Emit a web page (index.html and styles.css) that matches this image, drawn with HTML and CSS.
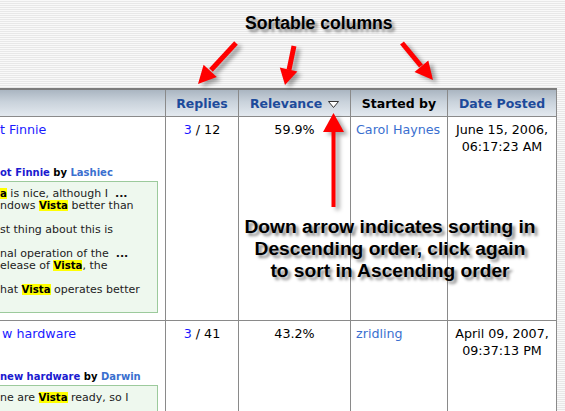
FILE: index.html
```html
<!DOCTYPE html>
<html>
<head>
<meta charset="utf-8">
<link rel="stylesheet" href="styles.css">
</head>
<body>
<div class="stage">
  <div class="caption">Sortable columns</div>
  <table class="results">
    <thead>
      <tr>
        <th class="c1"></th>
        <th class="c2"><a class="sort">Replies</a></th>
        <th class="c3"><a class="sort">Relevance</a><svg class="tri" width="11" height="7" viewBox="0 0 11 7"><polygon points="0.5,0.5 10.5,0.5 5.5,6.5" fill="#fff" stroke="#333" stroke-width="1"/></svg></th>
        <th class="c4">Started by</th>
        <th class="c5"><a class="sort">Date Posted</a></th>
      </tr>
    </thead>
    <tbody>
      <tr>
        <td class="c1">
          <div class="title"><a class="topic">t Finnie</a></div>
          <div class="byline"><a class="post">ot Finnie</a> by <a class="user">Lashiec</a></div>
          <div class="snips">
            <div class="snip">
              <div class="ln"><span class="hl">a</span> is nice, although I&nbsp;&nbsp;<b>...</b></div>
              <div class="ln">ndows <span class="hl">Vista</span> better than</div>
            </div>
            <div class="snip">
              <div class="ln">st thing about this is</div>
            </div>
            <div class="snip">
              <div class="ln">nal operation of the&nbsp;&nbsp;<b>...</b></div>
              <div class="ln">elease of <span class="hl">Vista</span>, the</div>
            </div>
            <div class="snip">
              <div class="ln">hat <span class="hl">Vista</span> operates better</div>
            </div>
          </div>
        </td>
        <td class="c2 num"><a class="topic">3</a> / 12</td>
        <td class="c3 num">59.9%</td>
        <td class="c4 starter"><a class="user">Carol Haynes</a></td>
        <td class="c5 date">June 15, 2006,<br>06:17:23 AM</td>
      </tr>
      <tr>
        <td class="c1">
          <div class="title t2"><a class="topic">w hardware</a></div>
          <div class="byline"><a class="post">new hardware</a> by <a class="user">Darwin</a></div>
          <div class="snips">
            <div class="snip">
              <div class="ln">ne are <span class="hl">Vista</span> ready, so I</div>
            </div>
          </div>
        </td>
        <td class="c2 num"><a class="topic">3</a> / 41</td>
        <td class="c3 num">43.2%</td>
        <td class="c4 starter"><a class="user">zridling</a></td>
        <td class="c5 date">April 09, 2007,<br>09:37:13 PM</td>
      </tr>
    </tbody>
  </table>

  <div class="note">Down arrow indicates sorting in<br>Descending order, click again<br>to sort in Ascending order</div>

  <svg class="arrows" width="565" height="411" viewBox="0 0 565 411">
    <g class="red">
      <line x1="236" y1="43" x2="211" y2="70" stroke="#ff0000" stroke-width="5"/>
      <polygon points="198,84 216.8,76.9 203.6,64.7" fill="#ff0000"/>
      <line x1="294" y1="46" x2="289" y2="70" stroke="#ff0000" stroke-width="5"/>
      <polygon points="285,85 297.4,71.4 279.8,67.4" fill="#ff0000"/>
      <line x1="402" y1="43" x2="421" y2="66" stroke="#ff0000" stroke-width="5"/>
      <polygon points="433,80 428.3,60.4 414.5,72" fill="#ff0000"/>
      <rect x="331.5" y="130" width="4" height="77" fill="#ff0000"/>
      <polygon points="333.5,113 344,132 323,132" fill="#ff0000"/>
    </g>
  </svg>
</div>
</body>
</html>
```
FILE: styles.css
```css
html, body {
  margin: 0;
  padding: 0;
}
body {
  width: 565px;
  height: 411px;
  overflow: hidden;
  background: repeating-linear-gradient(to bottom, #f9f9f9 0, #f9f9f9 1px, #e8e8e8 1px, #e8e8e8 2px);
  font-family: "DejaVu Sans", Verdana, sans-serif;
  font-size: 12.7px;
  color: #000;
}
.stage {
  position: relative;
  width: 565px;
  height: 411px;
}
.caption {
  height: 88px;
  box-sizing: border-box;
  padding: 13px 0 0 245px;
  font-family: "Liberation Sans", Arial, sans-serif;
  font-weight: bold;
  font-size: 17.6px;
  line-height: 20px;
  color: #000;
  text-shadow: 3px 3px 3px rgba(0,0,0,0.45);
}
.results {
  border-collapse: separate;
  border-spacing: 0;
  table-layout: fixed;
  width: 557px;
  border-top: 2px solid #7c7c7c;
  background: #fff;
}
.results th, .results td {
  box-sizing: border-box;
  border-right: 1px solid #8a8a8a;
  border-bottom: 1px solid #8a8a8a;
  padding: 0;
}
.c1 { width: 166px; }
.c2 { width: 73px; }
.c3 { width: 112px; }
.c4 { width: 97px; }
.c5 { width: 109px; }
.results th {
  height: 27px;
  background: linear-gradient(to bottom, #aab5c1 0%, #c9d2db 45%, #e3e9ef 100%);
  font-size: 12.5px;
  font-weight: bold;
  text-align: center;
  vertical-align: middle;
  white-space: nowrap;
  color: #000;
}
.sort {
  color: #1d4b9b;
}
.tri {
  margin-left: 6px;
  vertical-align: 0px;
}
.results td {
  vertical-align: top;
  padding-top: 4px;
  line-height: 17px;
}
.results td.c1 {
  padding: 4px 7px 7px 0;
  overflow: hidden;
}
.num, .date {
  text-align: center;
}
.starter {
  padding-left: 5px !important;
}
.topic {
  color: #1a1aff;
}
.user {
  color: #3a6fcf;
}
.title {
  white-space: nowrap;
}
.t2 { text-indent: 2px; }
.byline {
  margin-top: 28px;
  font-size: 10px;
  font-weight: bold;
  line-height: 13px;
  white-space: nowrap;
}
.byline .post { color: #1a1ad0; }
.snips {
  margin-top: 2px;
  margin-left: -4px;
  border: 1px solid #9cca9c;
  background: #eef8ee;
  padding: 6px 0 16px 3px;
  font-size: 11px;
  line-height: 12px;
  color: #222;
  display: flex;
  flex-direction: column;
  gap: 12px;
}
.ln {
  white-space: nowrap;
}
.ln b {
  font-weight: bold;
  color: #111;
}
.hl {
  background: #ffff00;
  font-weight: bold;
  font-size: 10.2px;
  color: #000;
}
.note {
  position: absolute;
  left: 240px;
  top: 216px;
  width: 300px;
  text-align: center;
  font-family: "Liberation Sans", Arial, sans-serif;
  font-weight: bold;
  font-size: 19.2px;
  line-height: 22px;
  color: #000;
  text-shadow: 3px 3px 3px rgba(0,0,0,0.45);
}
.arrows {
  position: absolute;
  left: 0;
  top: 0;
  pointer-events: none;
}
.red {
  filter: drop-shadow(4px 3px 2px rgba(0,0,0,0.35));
}
```
